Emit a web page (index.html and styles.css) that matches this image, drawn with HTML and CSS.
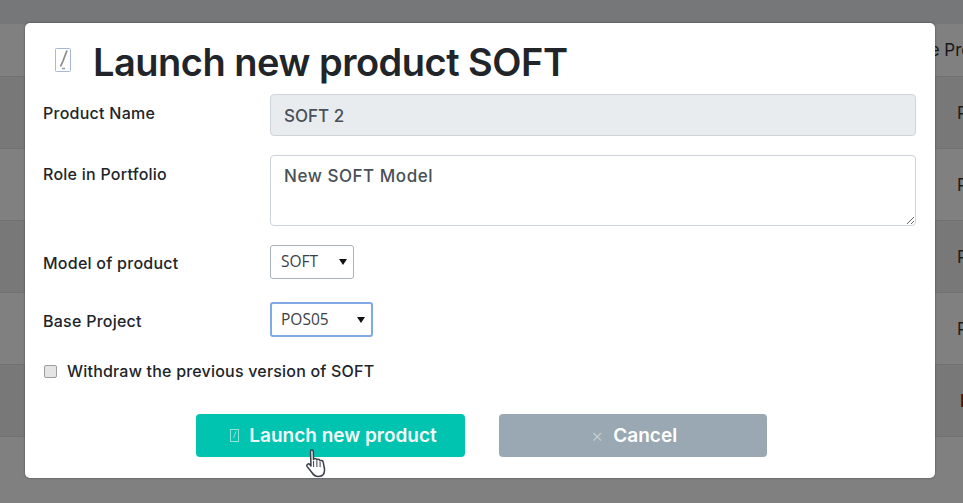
FILE: index.html
```html
<!DOCTYPE html>
<html lang="en">
<head>
  <meta charset="UTF-8" />
  <meta name="viewport" content="width=device-width, initial-scale=1.0"/>
  <title>Launch new product SOFT</title>
  <link rel="stylesheet" href="styles.css">
</head>
<body>
  <div class="page">
    <div class="topbar"></div>
    <div class="table-head"><span>Base Product</span></div>
    <div class="table-row shade"><span>POS04</span></div>
    <div class="table-row"><span>POS03</span></div>
    <div class="table-row shade"><span>POS02</span></div>
    <div class="table-row"><span>POS01</span></div>
    <div class="table-row shade last"><span>Draft</span></div>
  </div>

  <div class="modal">
    <h1 class="modal-title">
      <svg class="title-icon" viewBox="0 0 16 24" width="16" height="24" fill="none">
        <rect x="0.5" y="0.5" width="15" height="23" rx="1" stroke="#a9b6d6"/>
        <path d="M12 2.5 L8 13 L5.5 18.5" stroke="#8d8d8d" stroke-width="1.8"/>
        <path d="M7 20.5 H10" stroke="#8f9bb5" stroke-width="1.6"/>
      </svg>
      <span>Launch new product SOFT</span>
    </h1>
    <form>
      <div class="field">
        <label>Product Name</label>
        <input class="control readonly" type="text" value="SOFT 2" readonly>
      </div>
      <div class="field">
        <label>Role in Portfolio</label>
        <textarea class="control area">New SOFT Model</textarea>
      </div>
      <div class="field pick-model">
        <label>Model of product</label>
        <div class="pick-wrap model"><select class="pick"><option>SOFT</option></select></div>
      </div>
      <div class="field pick-base">
        <label>Base Project</label>
        <div class="pick-wrap base"><select class="pick"><option>POS05</option></select></div>
      </div>
      <div class="check-row">
        <input type="checkbox" id="withdraw">
        <label for="withdraw">Withdraw the previous version of SOFT</label>
      </div>
      <div class="actions">
        <button type="button" class="btn btn-go">
          <svg viewBox="0 0 9 13" width="9" height="13" fill="none" stroke="#8fe3d6">
            <rect x="0.5" y="0.5" width="8" height="12"/>
            <path d="M6 2.5 L3.5 9"/>
          </svg>
          Launch new product
        </button>
        <button type="button" class="btn btn-cancel"><span class="x">&times;</span> Cancel</button>
      </div>
    </form>
  </div>

  <svg class="hand" viewBox="0 0 22 29" width="22" height="29">
    <path d="M4.5 2.5 C4.5 0.6 7.3 0.6 7.3 2.5 L7.5 10.5 C8 9 10.5 9.2 10.8 11 C11.3 9.8 13.8 10 14 11.8 C14.8 11 17 11.4 17.2 13.2 L18.5 20 C18.8 24.5 17 27.5 12.5 27.5 C8.5 27.5 7 25.5 5.5 23 L1.2 17.6 C0 15.6 2.4 14 3.9 15.6 L5 17 Z" fill="#fff" stroke="#3b3f4a" stroke-width="1.5" stroke-linejoin="round"/>
    <path d="M7.6 12 V18 M10.9 12 V18 M14.1 13 V18" stroke="#3b3f4a" stroke-width="1"/>
  </svg>
</body>
</html>
```

FILE: styles.css
```css
html, body {
  margin: 0;
  height: 100%;
  overflow: hidden;
}
body {
  font-family: "Inter", "Open Sans", sans-serif;
  background-color: #808080;
  color: #212529;
}
.page {
  width: 100%;
  white-space: nowrap;
}
.topbar {
  height: 24px;
  background-color: #767778;
}
.table-head, .table-row {
  height: 72px;
  border-bottom: 1px solid #727272;
  box-sizing: border-box;
  display: flex;
  align-items: center;
  padding-left: 957px;
  background-color: #808080;
  color: #1c1c1c;
  font-size: 17px;
}
.table-head {
  height: 53px;
  padding-left: 900px;
  color: #16181a;
}
.shade {
  background-color: #787878;
}
.last span {
  color: #5a0f0f;
  font-weight: 600;
  padding-left: 3px;
}

.modal {
  position: absolute;
  left: 25px;
  top: 23px;
  width: 910px;
  height: 455px;
  box-sizing: border-box;
  padding: 0 19px 0 18px;
  background-color: #fff;
  border-radius: 5px;
  box-shadow: 0 0 2px rgba(0, 0, 0, 0.5);
}
.modal-title {
  display: flex;
  align-items: flex-start;
  gap: 22px;
  height: 71px;
  margin: 0;
  padding: 16px 0 0 12px;
  box-sizing: border-box;
  font-size: 38px;
  line-height: 46px;
  font-weight: 600;
  letter-spacing: -0.5px;
  color: #212529;
}
.title-icon {
  flex: none;
  margin-top: 9px;
}
.field {
  display: grid;
  grid-template-columns: 227px 1fr;
  margin-bottom: 19px;
  font-size: 16px;
  font-weight: 500;
  letter-spacing: 0.25px;
}
.field label {
  padding-top: 9px;
}
.control {
  box-sizing: border-box;
  width: 100%;
  border: 1px solid #ced4da;
  border-radius: 4px;
  padding: 10px 13px 8px;
  font-family: inherit;
  font-size: 17px;
  font-weight: 500;
  color: #495057;
  background-color: #fff;
}
.readonly {
  height: 42px;
  background-color: #e9ecef;
}
.area {
  display: block;
  height: 71px;
  letter-spacing: 0.55px;
}
.pick-wrap {
  position: relative;
}
.pick-wrap::after {
  content: "";
  position: absolute;
  top: 50%;
  margin-top: -3px;
  border-left: 4px solid transparent;
  border-right: 4px solid transparent;
  border-top: 6px solid #111;
  pointer-events: none;
}
.pick {
  appearance: none;
  display: block;
  width: 100%;
  height: 100%;
  box-sizing: border-box;
  font-family: "Open Sans", sans-serif;
  font-size: 15.5px;
  color: #3a4046;
  background-color: #fff;
  border: 1px solid #a9b1b9;
  border-radius: 3px;
  padding: 0 0 2px 10px;
}
.model {
  width: 84px;
  height: 34px;
}
.model::after {
  right: 7px;
}
.base {
  width: 103px;
  height: 35px;
}
.base::after {
  right: 8px;
}
.base .pick {
  border: 2px solid #80a9e6;
  padding-left: 9px;
}
.pick-model {
  margin-bottom: 23px;
}
.pick-base {
  margin-bottom: 24px;
}
.pick-model label {
  padding-top: 8px;
}
.pick-base label {
  padding-top: 9px;
}
.check-row {
  display: flex;
  align-items: center;
  gap: 10px;
  height: 20px;
  padding-left: 1px;
  font-size: 16px;
  font-weight: 500;
  letter-spacing: 0.2px;
}
.check-row input {
  appearance: none;
  box-sizing: border-box;
  margin: 0;
  width: 13px;
  height: 13px;
  background-color: #e4e4e4;
  border: 1px solid #9c9c9c;
  border-radius: 2px;
}
.actions {
  display: flex;
  gap: 34px;
  margin: 33px 0 0 153px;
}
.btn {
  box-sizing: border-box;
  height: 43px;
  border: none;
  border-radius: 4px;
  font-family: inherit;
  font-size: 19px;
  font-weight: 600;
  color: #f4f8f7;
  display: flex;
  align-items: center;
  justify-content: center;
  gap: 10px;
}
.btn-go {
  width: 269px;
  padding-left: 12px;
  background-color: #00c4b0;
}
.btn-cancel {
  width: 268px;
  padding-left: 8px;
  background-color: #99a8b2;
  color: #fff;
}
.x {
  font-weight: 300;
  color: #c5ced4;
}
.hand {
  position: absolute;
  left: 306px;
  top: 449px;
}
```
